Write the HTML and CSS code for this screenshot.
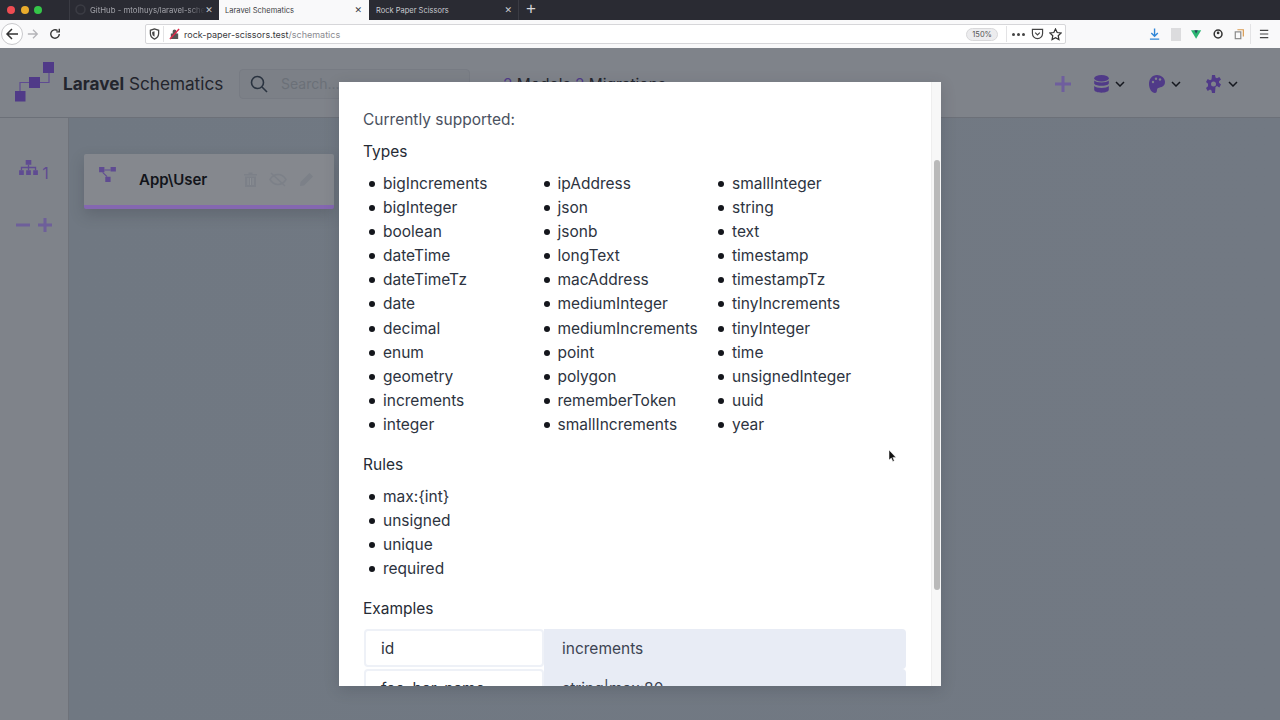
FILE: index.html
```html
<!DOCTYPE html>
<html lang="en">
<head>
<meta charset="utf-8">
<title>Laravel Schematics</title>
<link rel="stylesheet" href="styles.css">
</head>
<body>
<div class="browser">
  <div class="tabbar">
    <div class="lights"><i class="l red"></i><i class="l yellow"></i><i class="l green"></i></div>
    <div class="tab t1"><svg class="gh" width="11" height="11" viewBox="0 0 11 11"><circle cx="5.500" cy="5.500" r="4.500" fill="none" stroke="#3b3c44" stroke-width="1.500"/></svg><span class="tab-title fade">GitHub - mtolhuys/laravel-sche</span><span class="x">✕</span></div>
    <div class="tab active"><span class="tab-title">Laravel Schematics</span><span class="x">✕</span></div>
    <div class="tab t3"><span class="tab-title">Rock Paper Scissors</span><span class="x">✕</span></div>
    <div class="newtab">+</div>
  </div>
  <div class="toolbar">
    <div class="nav">
      <div class="back"><svg width="14" height="14" viewBox="0 0 14 14"><path d="M13 7H2M7 2 2 7l5 5" fill="none" stroke="#333" stroke-width="1.5"/></svg></div>
      <svg width="12" height="12" viewBox="0 0 14 14"><path d="M13 7H2M7 2 2 7l5 5" fill="none" stroke="#b4b4b8" stroke-width="1.5" transform="rotate(180 7 7)"/></svg>
      <svg class="reload" width="12" height="12" viewBox="0 0 14 14"><path d="M12 7a5 5 0 1 1-2-4M12 1v3.500H8.500" fill="none" stroke="#333" stroke-width="1.6"/></svg>
    </div>
    <div class="urlbar">
      <svg width="11" height="12" viewBox="0 0 12 13"><path d="M6 1 1.500 2.500V6c0 3 2 5 4.500 6 2.500-1 4.500-3 4.500-6V2.500Z" fill="none" stroke="#444" stroke-width="1.400"/><path d="M6 3.500 3.500 4.300V6c0 1.600 1 2.700 2.500 3.500Z" fill="#444"/></svg>
      <span class="sep sep-left"></span>
      <svg width="11" height="12" viewBox="0 0 12 13"><path d="M2 6h8v6H2zM4 6V3.500a2 2 0 0 1 4 0V6" fill="#555"/><path d="M1 12 11 1" stroke="#e0294a" stroke-width="1.600"/></svg>
      <span class="url">rock-paper-scissors.test<span class="url-path">/schematics</span></span>
      <span class="zoompill">150%</span>
      <span class="sep"></span>
      <span class="dots"><i></i><i></i><i></i></span>
      <svg class="pocket" width="13" height="12" viewBox="0 0 14 13"><path d="M1.500 1.500h11v4.500a5.500 5.500 0 0 1-11 0Z" fill="none" stroke="#444" stroke-width="1.300"/><path d="m4.500 5 2.500 2.500L9.500 5" fill="none" stroke="#444" stroke-width="1.300"/></svg>
      <svg width="13" height="13" viewBox="0 0 14 14"><path d="m7 1 1.800 3.900 4.200.5-3.100 2.900.8 4.200L7 10.400l-3.700 2.100.8-4.200L1 5.400l4.200-.5Z" fill="none" stroke="#333" stroke-width="1.300"/></svg>
    </div>
    <div class="extensions">
      <svg width="12" height="14" viewBox="0 0 12 14"><path d="M6 1v8M2.500 6 6 9.500 9.500 6M1 12.500h10" fill="none" stroke="#2f86d8" stroke-width="1.500"/></svg>
      <i class="ext-grey"></i>
      <svg width="11" height="11" viewBox="0 0 12 12"><path d="M0 1h12L6 11Z" fill="#2bb673"/><path d="M4 1h4L6 5Z" fill="#27445a"/></svg>
      <svg width="11" height="12" viewBox="0 0 12 12"><circle cx="6" cy="6" r="4.600" fill="none" stroke="#333" stroke-width="1.800"/><circle cx="6" cy="4.800" r="1.600" fill="#333"/></svg>
      <svg class="ext-copy" width="11" height="12" viewBox="0 0 12 13"><path d="M4 1.500h7v8" fill="none" stroke="#d99a50" stroke-width="1.400"/><rect x="1.500" y="4" width="6.500" height="8" fill="none" stroke="#888" stroke-width="1.400"/></svg>
      <span class="tsep"></span>
      <svg width="11" height="10" viewBox="0 0 11 10"><path d="M1 1h9M1 5h9M1 9h9" stroke="#444" stroke-width="1.300"/></svg>
    </div>
  </div>

  <div class="app">
    <header class="app-header">
      <svg class="logo" width="41" height="42" viewBox="0 0 41 42"><path d="M6 30V21.500H15M26 21.500H35V12" fill="none" stroke="#5f4b92" stroke-width="1.200"/><rect x="1" y="30" width="10.500" height="10.500" fill="#503a88"/><rect x="15" y="16" width="11" height="11" fill="#503a88"/><rect x="29" y="1" width="11" height="11" fill="#503a88"/></svg>
      <div class="brand"><b>Laravel</b> Schematics</div>
      <div class="search">
        <svg width="18" height="18" viewBox="0 0 18 18"><circle cx="7.500" cy="7.500" r="6" fill="none" stroke="#2a3340" stroke-width="1.600"/><path d="m12 12 5 5" stroke="#2a3340" stroke-width="1.600"/></svg>
        <span class="search-ph">Search...</span>
      </div>
      <div class="summary"><span class="num">2</span> Models <span class="num">2</span> Migrations</div>
      <div class="actions">
        <svg class="plus" width="16" height="16" viewBox="0 0 16 16"><path d="M8 0v16M0 8h16" stroke="#6f5e9e" stroke-width="3"/></svg>
        <div class="action"><svg width="15" height="18" viewBox="0 0 15 18"><ellipse cx="7.500" cy="3.300" rx="7.300" ry="3.200" fill="#503a88"/><path d="M.2 5.500c2 2.500 12.600 2.500 14.600 0v3.200c-2 2.700-12.600 2.700-14.600 0ZM.2 11c2 2.500 12.600 2.500 14.600 0v3.500c0 4.200-14.600 4.200-14.600 0Z" fill="#503a88"/></svg><svg class="chev" width="10" height="6" viewBox="0 0 10 6"><path d="m1 1 4 4 4-4" fill="none" stroke="#15181f" stroke-width="1.500"/></svg></div>
        <div class="action"><svg width="16" height="18" viewBox="0 0 16 18"><path d="M8 0C3 0 0 4 0 9c0 5 3 9 6 9 2.500 0 1.500-3 2.500-4.500S16 13 16 7c0-4-4-7-8-7Z" fill="#503a88"/><circle cx="4" cy="7" r="1.200" fill="#7f838a"/><circle cx="7" cy="3.700" r="1.200" fill="#7f838a"/><circle cx="11" cy="4.500" r="1.200" fill="#7f838a"/></svg><svg class="chev" width="10" height="6" viewBox="0 0 10 6"><path d="m1 1 4 4 4-4" fill="none" stroke="#15181f" stroke-width="1.500"/></svg></div>
        <div class="action"><svg width="17" height="18" viewBox="0 0 17 18"><path d="M7 0h3l.5 2.600 1.500.7 2.300-1.300 1.700 2.500-2 1.700v1.600l2 1.700-1.700 2.900-2.300-1.300-1.500.8L10 18H7l-.5-2.600-1.500-.8-2.300 1.300L1 13l2-1.700V8.700L1 7l1.700-3 2.300 1.300 1.500-.8Z" fill="#503a88"/><circle cx="8.500" cy="9" r="2.500" fill="#7f838a"/></svg><svg class="chev" width="10" height="6" viewBox="0 0 10 6"><path d="m1 1 4 4 4-4" fill="none" stroke="#15181f" stroke-width="1.500"/></svg></div>
      </div>
    </header>
    <div class="app-body">
      <aside class="sidebar">
        <div class="count"><svg width="19" height="15" viewBox="0 0 20 16"><path d="M7 0h6v5H7zM0 11h5v5H0zM7.500 11h5v5h-5zM15 11h5v5h-5z" fill="#5f4b92"/><path d="M2.500 11V8h15v3M10 5v6" fill="none" stroke="#5f4b92" stroke-width="1.400"/></svg><span class="count-num">1</span></div>
        <div class="zoomers"><svg width="14" height="14" viewBox="0 0 14 14"><path d="M0 7h14" stroke="#6e5f9a" stroke-width="3"/></svg><svg width="14" height="14" viewBox="0 0 14 14"><path d="M0 7h14M7 0v14" stroke="#6e5f9a" stroke-width="3"/></svg></div>
      </aside>
      <main class="canvas">
        <div class="model">
          <svg class="model-icon" width="19" height="15" viewBox="0 0 19 17"><path d="M0 0h6v6H0zM13 0h6v5h-6zM7 11h6v6H7z" fill="#5f4b92"/><path d="M6 3.500h7M4 6l5 5" fill="none" stroke="#5f4b92" stroke-width="1.200"/></svg>
          <span class="model-name">App\User</span>
          <div class="model-tools">
            <svg width="13" height="15" viewBox="0 0 13 15"><path d="M0 2h13v1.500H0zM4.500.5h4V2h-4zM1 4.500h11V15H1z" fill="#7c8088"/><path d="M4 6v7M6.500 6v7M9 6v7" stroke="#8b8f94" stroke-width="1"/></svg>
            <svg width="18" height="15" viewBox="0 0 18 15"><path d="M1 7.500S4 2.500 9 2.500s8 5 8 5-3 5-8 5-8-5-8-5Z" fill="none" stroke="#7c8088" stroke-width="1.500"/><path d="m2 1 14 13" stroke="#7c8088" stroke-width="1.500"/></svg>
            <svg width="15" height="15" viewBox="0 0 15 15"><path d="M10.500 1 14 4.500 5 13.500 1 14l.5-4Z" fill="#7c8088"/></svg>
          </div>
        </div>
      </main>
    </div>
    <div class="modal">
      <div class="modal-scroll">
        <p class="lead">Currently supported:</p>
        <h3 class="sub">Types</h3>
        <div class="type-grid">
          <ul>
            <li>bigIncrements</li><li>bigInteger</li><li>boolean</li><li>dateTime</li><li>dateTimeTz</li><li>date</li><li>decimal</li><li>enum</li><li>geometry</li><li>increments</li><li>integer</li>
          </ul>
          <ul>
            <li>ipAddress</li><li>json</li><li>jsonb</li><li>longText</li><li>macAddress</li><li>mediumInteger</li><li>mediumIncrements</li><li>point</li><li>polygon</li><li>rememberToken</li><li>smallIncrements</li>
          </ul>
          <ul>
            <li>smallInteger</li><li>string</li><li>text</li><li>timestamp</li><li>timestampTz</li><li>tinyIncrements</li><li>tinyInteger</li><li>time</li><li>unsignedInteger</li><li>uuid</li><li>year</li>
          </ul>
        </div>
        <h3 class="sub">Rules</h3>
        <ul class="rules"><li>max:{int}</li><li>unsigned</li><li>unique</li><li>required</li></ul>
        <h3 class="sub">Examples</h3>
        <div class="examples">
          <div class="ex-row"><div class="ex-key">id</div><div class="ex-val">increments</div></div>
          <div class="ex-row"><div class="ex-key">foo_bar_name</div><div class="ex-val">string|max:80</div></div>
        </div>
      </div>
      <div class="scrollbar"><div class="thumb"></div></div>
    </div>
    <svg class="cursor" width="8" height="12" viewBox="0 0 8 12"><path d="M0 0v10l2.300-2 1.500 3.500 1.500-.7L3.800 7.400H7Z" fill="#111" stroke="#fff" stroke-width=".5"/></svg>
  </div>
</div>
</body>
</html>
```

FILE: styles.css
```css
* { box-sizing: border-box; }
html, body { margin: 0; height: 100%; overflow: hidden; }
body { font-family: Inter, "Liberation Sans", sans-serif; }
.browser { display: flex; flex-direction: column; width: 1280px; height: 720px; }

.tabbar { display: flex; height: 20px; background: #2a2b33; color: #c9cad0; font-size: 7.500px; flex: none; }
.lights { display: flex; align-items: center; gap: 5.500px; width: 69px; padding-left: 7px; }
.l { width: 8px; height: 8px; border-radius: 50%; display: block; }
.red { background: #ee4c52; }
.yellow { background: #e8ab2c; }
.green { background: #35c649; }
.tab { display: flex; align-items: center; justify-content: space-between; height: 20px; padding: 0 6px 0 20px; border-left: 1px solid #3a3b43; }
.t1 { position: relative; width: 150px; padding-right: 8px; }
.gh { position: absolute; left: 5px; top: 4px; }
.active { width: 150px; background: #f9f9fa; color: #3c3d44; padding-left: 6px; padding-right: 7px; border-left: 0; }
.t3 { width: 150px; padding-left: 7px; border-left: 0; border-right: 1px solid #3a3b43; }
.tab-title { white-space: nowrap; }
.fade { font-size: 7.800px; -webkit-mask-image: linear-gradient(90deg, #000 85%, transparent); mask-image: linear-gradient(90deg, #000 85%, transparent); opacity: .75; }
.x { font-size: 9px; font-family: "DejaVu Sans", sans-serif; }
.newtab { width: 20px; text-align: center; font: 400 17px/18px "Liberation Sans", sans-serif; color: #d8d8dc; margin-left: 2px; }

.toolbar { display: flex; align-items: center; height: 28px; background: #f9f9fa; flex: none; }
.nav { display: flex; align-items: center; width: 145px; padding-left: 1px; flex: none; }
.back { width: 22px; height: 22px; border: 1px solid #c9c9cc; border-radius: 50%; background: #fff; display: flex; align-items: center; justify-content: center; margin-right: 4px; }
.reload { margin-left: 10px; }
.urlbar { display: flex; align-items: center; flex: none; width: 921px; height: 20px; background: #fff; border: 1px solid #d6d6d9; border-radius: 2px; padding: 0 3px; font: 9px Inter, "Liberation Sans", sans-serif; }
.sep { width: 1px; height: 16px; background: #e3e3e5; margin: 0 5px; }
.sep-left { margin: 0 5px 0 3px; }
.url { color: #3a3a40; margin-left: 4px; flex: 1; white-space: nowrap; }
.url-path { color: #8a8a90; }
.zoompill { background: #ececee; border: 1px solid #d8d8da; border-radius: 8px; font-size: 7.500px; color: #555; padding: 1px 5px; margin-right: 3px; }
.dots { display: flex; gap: 2px; margin-right: 6px; }
.dots i { width: 3px; height: 3px; background: #444; border-radius: 50%; display: block; }
.pocket { margin-right: 5px; }
.extensions { display: flex; align-items: center; flex: 1; min-width: 0; padding-left: 83px; }
.extensions > svg { margin-right: 11px; }
.ext-grey { width: 11px; height: 13px; background: #dcdcde; display: block; margin: 0 10px 0 0; }
.extensions > .ext-copy { margin-right: 5px; }
.tsep { width: 1px; height: 20px; background: #e3e3e5; margin: 0 8px 0 1px; }

.app { position: relative; flex: 1; display: flex; flex-direction: column; background: #767c85; overflow: hidden; }
.app-header { display: flex; align-items: center; height: 70px; background: #7f838a; border-bottom: 1px solid #6c7078; padding: 2px 42px 0 14px; flex: none; }
.logo { margin-top: -4px; }
.brand { font-size: 17.200px; color: #23252d; margin-left: 8px; width: 176px; white-space: nowrap; }
.brand b { font-weight: 700; }
.search { display: flex; align-items: center; width: 231px; height: 30px; background: #7c8087; border: 1px solid #777b83; border-radius: 4px; padding-left: 10px; gap: 13px; }
.search-ph { color: #6b7078; font-size: 14px; }
.summary { margin: 2px 0 0 33px; font-size: 15.500px; color: #23252d; white-space: nowrap; }
.num { color: #503a88; }
.actions { display: flex; align-items: center; margin-left: auto; gap: 24px; }
.plus { margin: 0 -1px 0 1px; }
.action { display: flex; align-items: center; gap: 6px; }
.chev { margin-top: 1px; }

.app-body { flex: 1; display: flex; min-height: 0; }
.sidebar { width: 69px; background: #7f838a; border-right: 1px solid #6e727a; display: flex; flex-direction: column; align-items: center; padding: 42px 0 0 0; flex: none; }
.count { display: flex; align-items: flex-start; gap: 4px; color: #5f4b92; }
.count-num { font-size: 16px; line-height: 16px; margin-top: 5px; }
.zoomers { display: flex; gap: 8px; margin-top: 37px; }
.canvas { flex: 1; background: linear-gradient(90deg, #707882, #727983); padding: 36px 0 0 15px; }
.model { display: flex; align-items: center; width: 250px; height: 55px; background: #85888e; border-bottom: 4px solid #8467b0; border-radius: 2px; padding: 0 20px 0 14px; box-shadow: 0 6px 14px rgba(50, 55, 65, .25); }
.model-icon { margin-top: -11px; }
.model-name { font-weight: 600; font-size: 15px; color: #12141a; margin-left: 22px; }
.model-tools { display: flex; align-items: center; gap: 12px; margin-left: auto; }

.modal { position: absolute; left: 339px; top: 34px; width: 602px; height: 604px; background: #fff; display: flex; box-shadow: 0 4px 14px rgba(40, 45, 55, .2); z-index: 2; }
.modal-scroll { flex: 1; min-width: 0; padding: 26px 24px 0; overflow: hidden; font-size: 15.500px; line-height: 24px; color: #2d3340; }
.lead { margin: 0 0 8px; color: #4a5160; }
.sub { margin: 0 0 8px; font-size: 15.500px; font-weight: 400; color: #262b35; }
.type-grid { display: grid; grid-template-columns: repeat(3, 174.500px); margin-bottom: 16px; }
ul { list-style: none; margin: 0; padding: 0 0 0 20px; }
li { position: relative; white-space: nowrap; line-height: 24.100px; }
li::before { content: ""; position: absolute; left: -14px; top: 9px; width: 6px; height: 6px; background: #14161c; border-radius: 50%; }
.rules { margin-bottom: 16px; }
.examples { display: flex; flex-direction: column; gap: 2px; width: 542px; margin: 1px 0 0 1px; }
.ex-row { display: flex; height: 38px; flex: none; }
.ex-key { width: 180px; background: #fff; border: 2px solid #eef1f7; border-radius: 4px; padding: 6px 0 0 15px; color: #2d3340; }
.ex-val { flex: 1; background: #e8ecf5; border-radius: 0 4px 4px 0; margin-bottom: -2px; padding: 8px 0 0 18px; color: #3d4452; }

.scrollbar { width: 10px; background: #f7f7f7; border-left: 1px solid #eeeeee; padding: 78px 1px 0 1px; flex: none; }
.thumb { height: 430px; background: #b9b9b9; border-radius: 4px; margin: 0 1px; width: 6px; }
.cursor { position: absolute; left: 889px; top: 402px; z-index: 3; }
```
